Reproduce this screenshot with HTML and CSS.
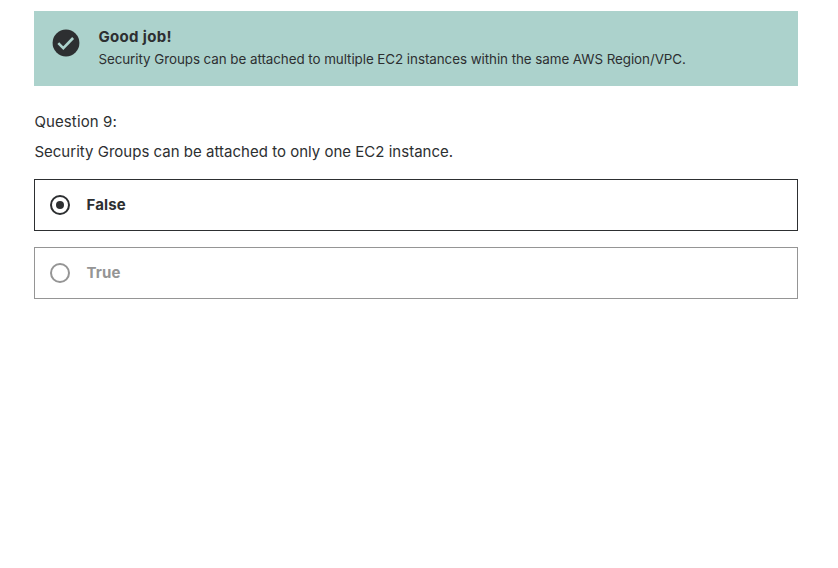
FILE: index.html
```html
<!DOCTYPE html>
<html lang="en">
<head>
<meta charset="utf-8">
<title>Quiz</title>
<link rel="stylesheet" href="styles.css">
</head>
<body>
<main class="quiz">
  <section class="feedback">
    <svg class="feedback-icon" width="28" height="28" viewBox="0 0 28 28" aria-hidden="true">
      <circle cx="14" cy="14" r="13.4" fill="#2d2f31"/>
      <path d="M6.3 14.2l5 5 9.8-10.2" fill="none" stroke="#acd2cc" stroke-width="2.6"/>
    </svg>
    <div>
      <h1 class="feedback-title">Good job!</h1>
      <p class="feedback-text">Security Groups can be attached to multiple EC2 instances within the same AWS Region/VPC.</p>
    </div>
  </section>
  <p class="number">Question 9:</p>
  <p class="prompt">Security Groups can be attached to only one EC2 instance.</p>
  <ul class="answers">
    <li class="answer selected"><i class="radio"></i><span class="label">False</span></li>
    <li class="answer"><i class="radio"></i><span class="label">True</span></li>
  </ul>
</main>
</body>
</html>
```
FILE: styles.css
```css
* { box-sizing: border-box; margin: 0; padding: 0; }
body { background: #fff; color: #2d2f31; font-family: Inter, "Liberation Sans", sans-serif; font-size: 15px; }
.quiz { width: 764px; margin: 11px 0 0 34px; }
.feedback { display: flex; height: 75px; padding: 18px; background: #acd2cc; }
.feedback-icon { flex: none; margin-right: 18.4px; }
.feedback-title { margin-top: -3px; font-size: 15px; line-height: 22px; font-weight: 700; letter-spacing: 0.35px; white-space: nowrap; }
.feedback-text { margin-top: 1px; font-size: 13.4px; line-height: 21px; letter-spacing: -0.06px; white-space: nowrap; }
.number { margin-top: 24px; padding-left: 0.4px; line-height: 24px; letter-spacing: 0.12px; }
.prompt { margin-top: 6px; padding-left: 0.4px; line-height: 24px; letter-spacing: 0.015px; }
.answers { list-style: none; margin-top: 15px; }
.answer { display: flex; align-items: center; height: 52px; padding: 0 15px; border: 1px solid #959595; color: #959595; font-weight: 700; }
.answer + .answer { margin-top: 16px; }
.selected { border-color: #2d2f31; color: #2d2f31; }
.radio { display: flex; align-items: center; justify-content: center; width: 20px; height: 20px; margin-right: 16.5px; border: 2px solid; border-radius: 50%; }
.selected .radio::after { content: ""; width: 8px; height: 8px; border-radius: 50%; background: currentColor; }
.label { padding-bottom: 2px; letter-spacing: 0.1px; }
```
